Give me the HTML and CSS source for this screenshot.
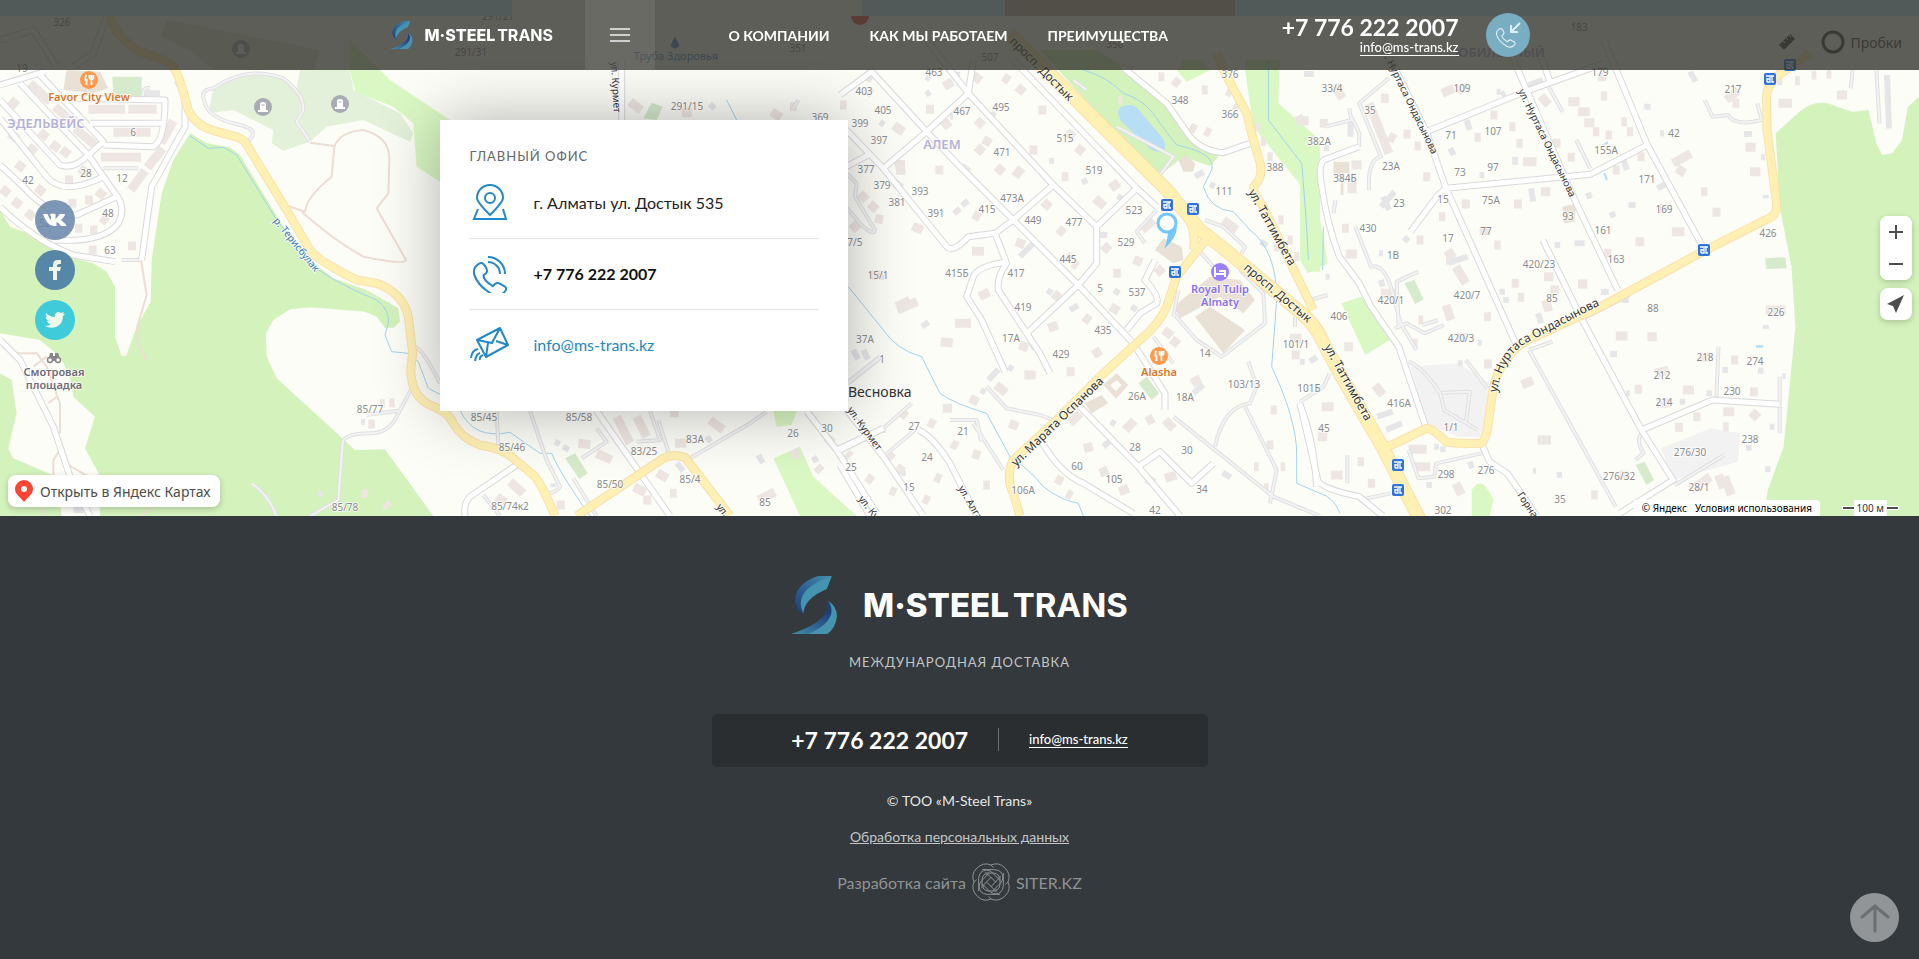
FILE: index.html
```html
<!DOCTYPE html>
<html lang="ru">
<head>
    <meta charset="UTF-8">
    <meta name="viewport" content="width=device-width, initial-scale=1.0">
    <title>M-Steel Trans</title>
    <link rel="stylesheet" href="styles.css">
</head>
<body>
    <!-- shared icons -->
    <svg class="sprite" aria-hidden="true">
        <defs>
            <linearGradient id="logo-top" x1="0" y1="1" x2="1" y2="0">
                <stop offset="0" stop-color="#1d3c78"/>
                <stop offset="1" stop-color="#428fae"/>
            </linearGradient>
            <linearGradient id="logo-bottom" x1="1" y1="0" x2="0" y2="1">
                <stop offset="0.2" stop-color="#1d3c78"/>
                <stop offset="1" stop-color="#428fae"/>
            </linearGradient>
            <symbol id="logo" viewBox="40 48 138 174">
                <path fill="url(#logo-top)" d="M122 48H162L147 87Q80 115 77 163Q50 145 52 116Q58 68 122 48Z"/>
                <path fill="#4593ae" d="M162 49L147 87Q80 115 77 160Q62 130 76 105Q94 72 162 49Z"/>
                <path fill="url(#logo-bottom)" d="M150 122Q166 132 164 156Q150 200 95 222H40Q120 195 143 162Q153 146 150 122Z"/>
                <path fill="#4593ae" d="M150 122Q178 138 178 168Q174 204 149 222H92Q152 196 161 160Q164 138 150 122Z"/>
            </symbol>
            <symbol id="handset" viewBox="0 0 100 100">
                <path fill="none" stroke="currentColor" stroke-width="5" stroke-linejoin="round" d="M5 26Q14 14 23 15Q34 24 35 34Q36 40 26 46Q27 60 50 73Q57 62 66 66L80 74Q86 79 80 86Q66 103 46 92Q12 72 3 44Q1 34 5 26Z"/>
            </symbol>
            <symbol id="stop" viewBox="0 0 12 12">
                <rect width="12" height="12" rx="2" fill="#2f73e0"/>
                <path fill="none" stroke="#fff" stroke-width="1.3" d="M2 3H10M8 3V9H10M3 5V9M6 4V7M3 9H6V6H3"/>
            </symbol>
            <symbol id="food" viewBox="0 0 18 18">
                <circle cx="9" cy="9" r="9" fill="#ff9a4d"/>
                <path fill="none" stroke="#fff" stroke-width="1.8" d="M6.500 4Q5 5 5.500 9H6.500V14M11.500 4V14M9.500 4V7Q11.500 10 13.500 7V4"/>
            </symbol>
            <symbol id="grave" viewBox="0 0 18 18">
                <circle cx="9" cy="9" r="9" fill="#a9abb5"/>
                <path fill="#fff" d="M6 12V6Q6 4 9 4Q12 4 12 6V12H14V14H4V12Z"/>
                <path stroke="#a9abb5" d="M7.500 7H10.500"/>
            </symbol>
        </defs>
    </svg>

    <header class="header">
        <div class="header-inner">
            <a class="brand brand-small" href="#">
                <svg class="brand-mark"><use href="#logo"/></svg>
                <span class="brand-name"><b>M·STEEL</b><span>TRANS</span></span>
            </a>
            <button class="burger" type="button" aria-label="Меню"><span></span><span></span><span></span></button>
            <nav class="nav">
                <a href="#">О КОМПАНИИ</a>
                <a href="#">КАК МЫ РАБОТАЕМ</a>
                <a href="#">ПРЕИМУЩЕСТВА</a>
            </nav>
            <div class="header-contacts">
                <a class="phone" href="tel:+77762222007">+7 776 222 2007</a>
                <a class="mail" href="mailto:info@ms-trans.kz">info@ms-trans.kz</a>
            </div>
            <button class="callback" type="button" aria-label="Обратный звонок">
                <svg viewBox="0 0 44 44" fill="none" stroke="#dfeef4">
                    <svg x="10" y="12" width="23" height="23" color="#dfeef4"><use href="#handset"/></svg>
                    <path stroke-width="2" d="M34 10L25 19M25 12V19H32"/>
                </svg>
            </button>
        </div>
    </header>

    <section class="gallery"><div class="slide slide-light"></div><div class="slide slide-brown"></div></section>

    <section class="map">
        <svg class="map-canvas" viewBox="0 16 1919 500" preserveAspectRatio="xMidYMin slice">
            <defs>
                <g id="streets">
                    <svg y="60" width="480" height="460" viewBox="0 0 1440 1380" overflow="visible">
                        <path d="M0 75L135 35M60 70L265 285L345 400Q380 440 355 490Q310 550 160 540M120 45L310 245L265 285Q220 330 180 315L0 120M0 175L140 350Q190 410 310 350M0 315L70 380Q150 470 230 465L350 410M0 440Q100 540 220 585L345 605M310 255L460 260Q495 240 495 120L230 115M270 190H485M530 60L555 100V200L455 380L425 600M0 840L60 900L160 1100L210 1250L270 1368M0 -60L100 -90L170 20M320 -130L280 -20L220 20"/>
                    </svg>
                    <svg x="430" y="100" width="480" height="420" viewBox="0 0 1440 1260" overflow="visible">
                        <path d="M500 933L720 1248M1130 933L1220 1050L1340 1240M1220 1050L1360 985M260 1095L120 1190Q100 1210 105 1248M575 -120V60"/>
                    </svg>
                    <svg x="840" y="60" width="480" height="460" viewBox="0 0 1440 1380" overflow="visible">
                        <path d="M0 105L95 35L260 215L350 310L520 480L715 675L880 850L975 1000V1050M260 -60L385 100L640 375L770 500V610L715 675L560 820M400 0L385 100L260 215L130 325M0 190L130 325L320 560Q340 580 385 530L465 520L520 480L640 375M890 385L770 500M520 0L890 385L950 440M465 520L500 610Q470 650 475 690L560 820L600 880L630 940M500 605Q410 620 400 650L380 710L425 780L495 935M860 810L900 760L950 730Q960 710 915 660L945 600M715 1035L895 1220L1020 1368M895 1220L960 1175L1055 1270L1120 1210M605 1145Q660 1240 730 1270L880 1360M235 1110Q280 1130 330 1210L410 1368M20 1050L130 1190L250 1368M0 1170L130 1105M0 1215L90 1368M840 15L980 130L1050 230Q1090 275 1150 278L1230 250M1380 1035Q1420 1130 1430 1280M0 330L85 285"/>
                    </svg>
                    <svg x="1300" y="60" width="619" height="460" viewBox="0 0 1568 1380" preserveAspectRatio="none" overflow="visible">
                        <path d="M205 -60L320 215L370 385L550 860M320 215L570 95L770 10M530 -30L600 160L700 430L805 690M605 -30L635 70M370 385L735 343L880 255M770 -60L880 255L1020 560M370 385L350 405L280 515M615 540L715 780L865 1110L945 1260L810 1360M865 1110L1045 1020L1215 1033M150 260L60 300Q45 320 55 380Q70 500 100 590L150 670L180 740L250 860L320 1105M460 1150L480 1205L525 1240L600 1368M0 1030L45 1260Q50 1285 150 1310L210 1368"/>
                    </svg>
                </g>
                <g id="lanes">
                    <svg y="60" width="480" height="460" viewBox="0 0 1440 1380" overflow="visible">
                        <path d="M740 245Q760 235 758 215Q750 200 700 190Q620 170 612 120Q600 90 640 85Q740 15 850 55Q920 110 908 155L890 185L930 245M1100 1065L1195 1052M1235 985L1195 1060Q1170 1120 1110 1120Q1030 1120 1028 1150L1015 1320L930 1368M755 1270Q810 1310 828 1368M1245 860Q1270 870 1320 970M1440 1290Q1370 1330 1400 1368M430 110Q425 80 450 85M310 325H415M365 600H420"/>
                    </svg>
                    <svg x="430" y="100" width="480" height="420" viewBox="0 0 1440 1260" overflow="visible">
                        <path d="M300 933L350 1080L390 1160Q380 1180 345 1180M205 1040L200 933M500 985L530 1025L455 1075M620 1025L690 1020L660 933M715 1055L685 960M780 1075L960 970L1010 935M430 1135L500 1248M1090 25L1105 0M160 1185L210 1248M1254 850L1350 775"/>
                    </svg>
                    <svg x="840" y="60" width="480" height="460" viewBox="0 0 1440 1380" overflow="visible">
                        <path d="M10 330L50 370L45 410L105 510Q100 530 60 490L0 420M25 965L120 890M130 1105L215 1030M130 1190L225 1110M440 980L500 1045L600 1065L640 1080M330 1080H410L425 1145M400 1090L490 1230M915 550L890 515L950 450M1000 770L1015 690M1000 760L1070 840L1145 890L1275 790L1270 700L1200 630M1095 480L1150 500L1215 560L1205 580M940 830L1000 910M1125 1160Q1150 1040 1230 1030L1250 980L1225 905M1000 1070L1300 1310L1440 1368M1215 1040L1310 1230L1290 1330M1075 570L1120 620M830 200L1000 290L960 345M700 60L740 90M1365 770V800"/>
                    </svg>
                    <svg x="1300" y="60" width="619" height="460" viewBox="0 0 1568 1380" preserveAspectRatio="none" overflow="visible">
                        <path d="M580 870L800 1340M580 870L640 845M720 775L835 705M225 55L150 130L205 290Q170 300 175 390M65 200L130 180L125 145M150 260L150 220L130 170M140 500L180 620Q210 610 230 680L255 790L295 870M300 635L245 665L250 800M240 805L270 790L315 820L365 795M310 795L350 780M275 905Q310 920 355 1000L365 1050L450 1110M360 998L430 995L420 1090M420 900L475 985M75 940L60 980L0 1025M1025 120L1045 170L1085 165Q1100 200 1170 180L1158 130M1060 860L1055 1010M1215 950V1120M865 1120Q850 1140 870 1180L850 1200M950 1275L1075 1185M275 1170L300 1255L340 1250L345 1210L460 1180M120 1185V1270M150 1320L230 1300M630 80L665 155M735 325L700 240M1395 85L1400 30M1468 190L1460 30M25 720L70 705M85 460L90 420"/>
                    </svg>
                </g>
                <g id="highways">
                    <svg y="60" width="480" height="460" viewBox="0 0 1440 1380" overflow="visible">
                        <path d="M330 -132Q340 -80 410 -30L500 5Q530 20 545 80L565 150Q585 195 640 212L715 232Q735 240 750 270L860 450L930 570Q950 600 1070 660L1130 670Q1210 700 1225 770L1238 880L1232 930Q1235 1010 1290 1035Q1345 1055 1360 1090Q1385 1135 1440 1155Q1510 1165 1540 1195L1600 1245Q1625 1270 1665 1368"/>
                    </svg>
                    <svg x="430" y="100" width="480" height="420" viewBox="0 0 1440 1260" overflow="visible">
                        <path d="M440 1248L700 1075Q725 1060 765 1072L900 1248"/>
                    </svg>
                    <svg x="840" y="60" width="480" height="460" viewBox="0 0 1440 1380" overflow="visible">
                        <path d="M1130 -20L1150 30L1220 160L1240 240L1255 290Q1275 345 1245 375Q1230 390 1270 440L1420 750M1105 530L1010 650L980 740Q960 790 900 840L780 950L650 1080L520 1200Q495 1250 520 1300L540 1368M1040 470Q1070 510 1060 570"/>
                    </svg>
                    <svg x="1300" y="60" width="619" height="460" viewBox="0 0 1568 1380" preserveAspectRatio="none" overflow="visible">
                        <path d="M215 1165L320 1105Q335 1105 370 1145Q390 1152 460 1150Q475 1130 478 1080L490 980Q510 890 570 845L770 735L1020 575L1195 470Q1212 455 1206 420L1183 210L1182 110Q1185 60 1225 35L1290 -20"/>
                    </svg>
                </g>
                <path id="avenue" d="M1010 34L1093 117L1167 190L1200 230L1223 248L1270 287L1300 312Q1315 324 1322 340L1340 374L1383 448L1420 520"/>
                <path id="ondasynova" d="M1497 393Q1503 354 1530 341L1606 302"/>
            </defs>

            <!-- parks, water, blocks -->
            <svg y="60" width="480" height="460" viewBox="0 0 1440 1380" overflow="visible">
                <path class="park" d="M0 450L30 500L160 550L200 590L280 610L320 635L345 680V830L365 888H378L410 800L452 725L455 600L485 400L520 300L570 220L620 250L690 262L720 285L850 500L930 600L1000 655L1100 690L1195 745L1200 785L1180 803H1155L1130 770L1095 755L930 742L870 748L820 780L798 820L800 890L830 955L1000 1110L1065 1170L1155 1168L1300 1368H300L296 1240L255 1165L285 1070L220 1010L210 950L180 890L120 840L0 820ZM0 940L35 960L50 1060L25 1165L40 1195L170 1250L185 1368H0Z"/>
                <path class="park-dull" d="M640 85Q740 20 850 55L890 85L900 30H1050L1060 90L1200 160L1240 220L1230 245L1090 180L980 200L930 245L850 272L815 250L820 210L700 150L625 160ZM485 -70L500 -120L960 -30L940 30H640L580 -20Z"/>
                <path class="park-light" d="M1050 30L1048 -60L1170 60L1350 180L1320 365L1250 320L1240 190L1180 140L1065 95Z"/>
                <path class="court" d="M337 50H425V108H340Z"/>
                <path class="mall" d="M190 90L200 30L300 35L325 85L280 100Z"/>
            </svg>
            <svg x="430" y="100" width="480" height="420" viewBox="0 0 1440 1260" overflow="visible">
                <path class="park-light" d="M1030 1075L1110 1040L1150 1130L1280 1248H1110ZM1030 933H1100L1085 975L1040 980Z"/>
                <path class="court" d="M405 1075L435 1060L473 1120L448 1137ZM640 55L665 8L698 20L680 60Z"/>
            </svg>
            <svg x="840" y="60" width="480" height="460" viewBox="0 0 1440 1380" overflow="visible">
                <path class="park" d="M600 -30H770L870 30Q960 90 1000 160L1060 240L1135 290L1110 318L1030 290L960 345L800 190Z"/>
                <path class="park-light" d="M1010 30L1030 0H1080L1110 30L1040 65ZM1215 30V0H1320L1315 130L1440 240V635H1410L1380 580L1385 380L1240 200Z"/>
                <path class="pond" d="M834 160Q836 138 858 136Q882 132 895 148L968 235Q980 255 972 272Q950 280 932 268L842 182Z"/>
                <path class="court" d="M895 970L920 950L958 1000L935 1020Z"/>
                <path class="mall" d="M1000 740L1110 650L1200 660L1245 720L1210 760L1140 710L1020 775ZM1065 770L1110 740L1215 810L1150 880ZM945 570L970 535L1025 560L1030 600L1000 610ZM735 1030L785 1005L805 1030L755 1060ZM1015 300L1040 285L1065 310L1060 335L1030 335Z"/>
                <path class="mall-ring" d="M800 975L830 950L855 975L828 1005Z"/>
            </svg>
            <svg x="1300" y="60" width="619" height="460" viewBox="0 0 1568 1380" preserveAspectRatio="none" overflow="visible">
                <path class="park" d="M1205 220L1265 155Q1310 110 1360 140L1400 155L1440 150L1460 250L1475 285L1500 280L1525 240L1540 140L1568 110V1368H1175L1185 1290L1225 1160L1255 800L1245 620L1215 440Z"/>
                <path class="park-light" d="M0 230L40 400L70 610L20 640L0 600ZM105 730L155 710L175 735L235 835L165 885ZM435 1368L435 1290Q460 1240 490 1320L480 1368Z"/>
                <path class="yard" d="M915 1165L1040 1105L1115 1120L1110 1205L945 1260ZM280 920L400 910L480 970L465 1130L400 1130L320 1090Z"/>
                <path class="court" d="M1178 595L1230 592L1233 625L1182 627ZM265 670L290 660L313 718L292 732ZM850 1215L873 1205L897 1260L878 1275Z"/>
                <path class="mall" d="M85 305H125V340H110V405H103V350H85ZM665 440L700 430L695 485L668 490Z"/>
                <path class="pond" d="M765 255L780 243V253ZM768 340L773 338L780 358L775 362ZM1155 855H1173V863H1155Z"/>
            </svg>

            <!-- houses: short thick strokes -->
            <svg y="60" width="480" height="460" viewBox="0 0 1440 1380" overflow="visible">
                <path class="house" d="M30 220l22 18M50 310l22 18M85 260l22 18M120 215l22 18M155 250l22 18M185 268l22 18M30 120l22 18M195 360h24M240 325l22 18M5 385l22 18M40 420l22 18M80 455l22 18M110 382l22 18M205 430h24M255 420h24M292 392l22 18M225 505h22M270 510h22M304 472l18 14M266 570h24M384 558h24M265 148H375M385 148H470M340 217H452M303 292H423M483 248L520 183M442 323L488 265M392 390L435 332M90 70L150 125M165 140L220 190M225 205L285 255M1105 1092h20M1168 1028h16M1140 1030h14M1085 1300h18M1155 1330l12 12"/>
                <path class="shed" d="M435 100H480M955 1303h14M1083 1086h12M220 1350h30"/>
            </svg>
            <svg x="430" y="100" width="480" height="420" viewBox="0 0 1440 1260" overflow="visible">
                <path class="house" d="M600 5l34 26M1025 35l28 18M755 38h30M720 938h26M840 960l40 30M735 1030h34M500 1060l45 20M445 1030l36 4M682 1118l30 18M612 1160l34 18M200 1190l26 18M240 1145l40 36M380 1215h24M985 1200l50 -24M1088 1068l20 -14M1190 1030l18 -20M640 1200h24M1160 1100l14 14M1395 80l26 16M1405 185l10 36M1390 245l24 20M1400 620l40 -20M1265 370l20 20M1290 280l20 20M1320 310l20 20M1335 355l24 4M1320 525l50 0M560 950l40 80M620 950l30 60M1370 1060l20 16M1400 1100l20 16M1310 1130l18 14M1250 1060l12 10M1080 20h20M1230 15h20M720 1180h20"/>
                <path class="shed" d="M840 12l14 14M985 1065l14 24M740 1090l20 22M375 1025l14 8M1150 1070l10 16M1300 750l14 28M1270 750l14 28M1350 65l12 10M400 1040l16 10M370 1150v12M830 1010l12 16"/>
            </svg>
            <svg x="840" y="60" width="480" height="460" viewBox="0 0 1440 1380" overflow="visible">
                <path class="house" d="M312 80l26 -16M400 45l22 18M490 50l18 12M532 80l20 18M595 150h24M258 148h24M75 45l22 12M162 195l24 20M308 200l22 -16M410 180l20 18M430 238l22 12M568 270h24M680 215l20 18M710 262l20 16M182 300v44M286 330h24M365 320l20 18M410 260l20 18M470 320l20 18M525 350l20 -26M665 350h20M812 385l24 -18M765 415l28 24M218 498l30 14M400 462l20 12M396 574h36M528 545l26 10M610 425l20 18M655 505l18 16M680 585l18 16M790 555l18 18M820 640h22M882 598l24 10M950 622l18 20M418 710l30 -14M172 750l60 -26M302 845l36 4M345 790h48M640 700l18 14M732 770l18 14M812 740l24 14M625 805l28 -10M538 855l26 8M680 935h24M760 885l22 -14M553 945h34M468 975l30 24M972 810l24 18M995 838l20 16M95 645h40M308 1045h28M390 1015l24 12M265 1085l20 10M180 1055l20 14M335 1150l18 10M398 1180l22 8M430 1275h20M285 1250l18 8M250 1315l18 8M150 1290l18 8M508 1090l26 10M690 1090l30 -30M732 1165l26 -6M780 1240l24 -10M648 1255l20 10M680 1300l16 8M838 1295l28 -10M920 1255l22 14M975 1255l34 -10M855 1110l28 -28M920 1085l20 -12M975 1080l26 26M1055 970l26 -14M1350 835h34M1355 885h24M1292 1050h18M1280 1155h20M1242 1220h14M1322 1220h14M1272 1283h14M955 50h18M1000 60l18 14M1085 90h18M1050 200l18 10M1095 212l16 8M1160 92l16 8M1182 135l14 8M1245 200h16M1262 245h16M1282 290h16M1368 185l24 -12M1408 245l18 -8M1315 480h16M1342 540h16M1362 590h16M1302 560h16M905 510l36 -30M1150 480l40 30M80 90l16 10M700 610l12 10M835 120l12 0"/>
                <path class="shed" d="M258 50l12 8M258 104l12 -8M348 44h12M452 160l14 8M366 436l18 -14M342 460l18 -14M628 302h14M726 368l16 -8M832 408l14 8M540 590L580 550M780 525h22M822 690l16 10M874 740l16 10M622 690l14 10M690 750l24 -14M246 800l20 -14M575 850l10 18M445 960l30 -32M422 990l14 8M812 1085l14 8M125 1110h12M1065 350l26 -14M1110 372l14 8M1262 545l20 12M1392 42h28M1148 1238l24 14M790 1160l22 -18M1380 905l14 0M1410 905l20 -14M1060 1000l30 -26M505 920l14 8M330 170h10M185 1240h12"/>
            </svg>
            <svg x="1300" y="60" width="619" height="460" viewBox="0 0 1568 1380" preserveAspectRatio="none" overflow="visible">
                <path class="house" d="M88 75l20 40M2 182h20M50 190h20M175 130L225 280M225 228l16 10M262 222h18M290 258h16M360 100l30 -16M400 92l26 -12M482 165h18M442 232h16M530 200h16M548 250h16M565 305h34M610 108l20 26M680 125h28M704 155h30M720 188h26M762 108h16M755 50h20M640 250h20M678 292h18M742 215h16M774 225h16M792 330h18M814 185h14M828 215h16M855 290h18M945 310L990 280M955 325l20 15M1080 120L1110 90M1128 262h26M1140 335h26M1212 130h34M1360 105h26M1208 62h14M1254 62h12M1296 46h12M1334 42h12M1016 395h16M1045 457h20M910 445h28M942 515h32M850 545h22M770 580h18M704 672h24M618 650h24M536 670h18M552 712h16M634 690h22M622 720l8 34M466 770h18M395 620l25 50M370 600h24M352 470h16M410 432h20M312 350h18M106 505h18M116 582h28M295 540h18M205 700h36M370 735l12 45M398 832h24M466 912h20M284 850h14M112 860h22M55 1040h30M45 1130h24M78 1245h30M146 1205h16M172 1270h18M190 975l20 30M275 1168h46M290 1220h40M395 1270l14 34M562 975l28 -14M602 1140h34M800 828h30M880 830h24M900 940l34 -10M1012 892h30M970 990h28M904 1030h32M848 988h18M950 1102h20M996 1070h18M1072 1055h28M1144 1075l16 -20M1140 995h20M1092 900h18M1072 1100h14M1180 750h50M738 1305h16M808 1245h24M990 1290L1040 1250M1060 1245l12 40M1075 1250l18 55M610 395h24M542 432h20M492 555h16M455 512h28M370 590l20 -16M130 315h26M132 340v60M1095 130h18M300 780h12M205 115h20"/>
                <path class="shed" d="M60 265h14M128 180v50M380 265l10 20M455 345h12M498 95h10M422 180l8 30M545 290v24M610 195h10M510 105l10 -6M905 385l24 -14M872 140h16M988 35l14 30M1125 222h20M1168 292h10M1180 405v10M785 468l14 -8M725 410l14 -6M832 435h18M695 550h26M645 555h14M585 385l6 40M580 75L615 60M205 440L240 395M210 410l16 40M264 545l10 -14M205 660l4 20M200 580h10M375 608L425 590M505 695h14M515 720h14M603 760l8 30M762 695h20M815 720h18M785 882h18M1030 1000h14M826 1000h10M962 1025h14M1070 930h14M1160 932h14M1222 948h8M1130 1163h14M1178 1228h14M1487 45L1492 205M218 1110L258 1090M195 1070L235 1055M320 1275h14M340 1160h12M355 1168h14M430 1205l6 20M1190 1100h12M1180 795v12M912 220h10M65 650h10M820 300l8 30M10 42h24M650 1245h14M590 1232h8M400 910h12M450 848h10"/>
            </svg>

            <!-- footpaths and rivers -->
            <svg y="60" width="480" height="460" viewBox="0 0 1440 1380" overflow="visible">
                <path class="foot" d="M865 438L915 455Q920 410 995 350L1003 260Q1020 215 1090 210Q1170 230 1168 300L1165 400L1130 445L1218 600Q1215 615 1090 590Q1000 540 905 455M930 248L1003 258M423 600L440 705L412 800L415 850L440 900M50 880L110 880L140 920L180 1030V1120M100 920L140 890M145 1030L170 1010M180 1170L160 1200V1245M205 1215L265 1250M130 1368V1340M425 1368L460 1340"/>
                <path class="river" d="M570 228L625 265L670 262L710 285L830 480L950 625Q1010 670 1130 720Q1170 750 1165 790L1155 825L1175 875L1225 880L1255 905L1285 985L1320 1003L1380 1050Q1420 1140 1530 1117L1620 1180H1655Q1680 1240 1770 1368"/>
            </svg>
            <svg x="840" y="60" width="480" height="460" viewBox="0 0 1440 1380" overflow="visible">
                <path class="river" d="M-340 120Q-320 160 -300 200M25 680L130 810Q170 870 245 890L300 1000Q340 1030 440 1060L510 1190Q560 1220 610 1280Q660 1320 715 1330L730 1368M730 30Q800 50 850 100Q920 120 960 190L1010 255Q1130 280 1115 330L1090 380Q1110 450 1180 455L1230 510Q1310 570 1310 720L1295 920Q1370 1080 1370 1180V1270L1440 1300Q1480 1310 1500 1360M1285 0V180L1385 310Q1400 480 1405 600M1450 500L1448 630"/>
            </svg>

            <!-- roads -->
            <use class="lane-case" href="#lanes"/>
            <use class="lane-fill" href="#lanes"/>
            <use class="street-case" href="#streets"/>
            <use class="street-fill" href="#streets"/>
            <use class="highway-case" href="#highways"/>
            <use class="avenue-case" href="#avenue"/>
            <use class="highway-fill" href="#highways"/>
            <use class="avenue-fill" href="#avenue"/>

            <!-- house numbers -->
            <g class="num">
                <text x="62" y="26">326</text><text x="22" y="72">19</text><text x="498" y="20">291/27</text><text x="471" y="56">291/31</text><text x="798" y="52">351</text><text x="990" y="61">507</text><text x="1115" y="48">350</text><text x="1579" y="31">183</text>
                <text x="133" y="136">6</text><text x="86" y="177">28</text><text x="28" y="184">42</text><text x="122" y="182">12</text><text x="108" y="217">48</text><text x="45" y="227">52</text><text x="110" y="254">63</text><text x="370" y="413">85/77</text><text x="345" y="511">85/78</text>
                <text x="687" y="110">291/15</text><text x="820" y="121">369</text><text x="484" y="421">85/45</text><text x="579" y="421">85/58</text><text x="793" y="437">26</text><text x="827" y="432">30</text><text x="695" y="443">83А</text><text x="512" y="451">85/46</text><text x="644" y="455">83/25</text><text x="610" y="488">85/50</text><text x="690" y="483">85/4</text><text x="765" y="506">85</text><text x="510" y="510">85/74к2</text>
                <text x="934" y="76">463</text><text x="864" y="95">403</text><text x="883" y="114">405</text><text x="860" y="127">399</text><text x="962" y="115">467</text><text x="1001" y="111">495</text><text x="879" y="144">397</text><text x="1002" y="156">471</text><text x="1065" y="142">515</text><text x="1094" y="174">519</text><text x="866" y="173">377</text><text x="882" y="189">379</text><text x="920" y="195">393</text><text x="897" y="206">381</text><text x="936" y="217">391</text><text x="1012" y="202">473А</text><text x="987" y="213">415</text><text x="1033" y="224">449</text><text x="1074" y="226">477</text><text x="1134" y="214">523</text><text x="1126" y="246">529</text><text x="1068" y="263">445</text><text x="957" y="277">415Б</text><text x="1016" y="277">417</text><text x="1100" y="292">5</text><text x="1137" y="296">537</text><text x="1023" y="311">419</text><text x="878" y="279">15/1</text><text x="852" y="246">77/5</text><text x="1103" y="334">435</text><text x="1011" y="342">17А</text><text x="865" y="343">37А</text><text x="882" y="363">1</text><text x="1061" y="358">429</text><text x="1205" y="357">14</text><text x="1244" y="388">103/13</text><text x="1296" y="348">101/1</text><text x="1137" y="400">26А</text><text x="1185" y="401">18А</text><text x="914" y="430">27</text><text x="963" y="435">21</text><text x="927" y="461">24</text><text x="1135" y="451">28</text><text x="1187" y="454">30</text><text x="1077" y="470">60</text><text x="1114" y="483">105</text><text x="1202" y="493">34</text><text x="1155" y="514">42</text><text x="909" y="491">15</text><text x="851" y="471">25</text><text x="1023" y="494">106А</text><text x="1180" y="104">348</text><text x="1230" y="78">376</text><text x="1230" y="118">366</text><text x="1275" y="171">388</text><text x="1224" y="195">111</text><text x="1309" y="392">101Б</text>
                <text x="1332" y="92">33/4</text><text x="1370" y="114">35</text><text x="1462" y="92">109</text><text x="1600" y="76">179</text><text x="1733" y="93">217</text><text x="1319" y="145">382А</text><text x="1451" y="139">71</text><text x="1493" y="135">107</text><text x="1674" y="137">42</text><text x="1606" y="154">155А</text><text x="1391" y="170">23А</text><text x="1345" y="182">384Б</text><text x="1460" y="176">73</text><text x="1493" y="171">97</text><text x="1647" y="183">171</text><text x="1443" y="203">15</text><text x="1491" y="204">75А</text><text x="1399" y="207">23</text><text x="1664" y="213">169</text><text x="1568" y="220">93</text><text x="1368" y="232">430</text><text x="1448" y="242">17</text><text x="1486" y="235">77</text><text x="1603" y="234">161</text><text x="1768" y="237">426</text><text x="1393" y="259">1В</text><text x="1539" y="268">420/23</text><text x="1616" y="263">163</text><text x="1391" y="304">420/1</text><text x="1467" y="299">420/7</text><text x="1552" y="302">85</text><text x="1653" y="312">88</text><text x="1339" y="320">406</text><text x="1776" y="316">226</text><text x="1461" y="342">420/3</text><text x="1705" y="361">218</text><text x="1755" y="365">274</text><text x="1662" y="379">212</text><text x="1732" y="395">230</text><text x="1399" y="407">416А</text><text x="1664" y="406">214</text><text x="1451" y="431">1/1</text><text x="1324" y="432">45</text><text x="1750" y="443">238</text><text x="1690" y="456">276/30</text><text x="1446" y="478">298</text><text x="1486" y="474">276</text><text x="1619" y="480">276/32</text><text x="1699" y="491">28/1</text><text x="1560" y="503">35</text><text x="1443" y="514">302</text>
            </g>

            <!-- street names -->
            <g class="street-name">
                <text transform="translate(1009 42) rotate(45)">просп. Достык</text>
                <text transform="translate(1243 269) rotate(40)">просп. Достык</text>
                <text transform="translate(1248 192) rotate(61)">ул. Таттимбета</text>
                <text transform="translate(1324 347) rotate(61)">ул. Таттимбета</text>
                <text transform="translate(1016 467) rotate(-44)">ул. Марата Оспанова</text>
                <text><textPath href="#ondasynova">ул. Нуртаса Ондасынова</textPath></text>
            </g>
            <g class="street-name street-small">
                <text transform="translate(1380 48) rotate(64)">ул. Нуртаса Ондасынова</text>
                <text transform="translate(1518 91) rotate(64)">ул. Нуртаса Ондасынова</text>
                <text transform="translate(847 410) rotate(54)">ул. Курмет</text>
                <text transform="translate(611 62) rotate(87)">ул. Курмет</text>
                <text transform="translate(858 499) rotate(52)">ул. Курмет</text>
                <text transform="translate(958 488) rotate(60)">ул. Алгабас</text>
                <text transform="translate(716 507) rotate(52)">ул. Горная</text>
                <text transform="translate(1517 495) rotate(56)">Горная</text>
                <text class="river-name" transform="translate(273 221) rotate(51)">р. Терисбулак</text>
            </g>

            <!-- places -->
            <g class="place">
                <use href="#food" x="80" y="71" width="18" height="18"/>
                <text class="food" x="89" y="101">Favor City View</text>
                <use href="#food" x="1150" y="347" width="18" height="18"/>
                <text class="food" x="1159" y="376">Alasha</text>
                <use href="#grave" x="254" y="98" width="18" height="18"/>
                <use href="#grave" x="331" y="95" width="18" height="18"/>
                <use href="#grave" x="232" y="40" width="18" height="18"/>
                <circle cx="1220" cy="272" r="9" fill="#9a80ff"/>
                <path fill="none" stroke="#fff" stroke-width="2" d="M1215 267V277M1215 274H1225V277M1219 271H1225V274"/>
                <text class="hotel" x="1220" y="293">Royal Tulip</text>
                <text class="hotel" x="1220" y="306">Almaty</text>
                <path fill="#8a8588" d="M48 361L50 353H53V356H55V353H58L61 361Z"/>
                <g fill="#fff" stroke="#8a8588" stroke-width="1.500"><circle cx="50" cy="360" r="2.500"/><circle cx="58" cy="360" r="2.500"/></g>
                <text class="view" x="54" y="376">Смотровая</text>
                <text class="view" x="54" y="389">площадка</text>
                <text class="district" x="46" y="128">ЭДЕЛЬВЕЙС</text>
                <text class="district" x="942" y="149">АЛЕМ</text>
                <text class="district" x="1500" y="57">ЮБИЛЕЙНЫЙ</text>
                <text class="town" x="848" y="397">Весновка</text>
                <circle cx="860" cy="16" r="9" fill="#e8554e"/>
                <path fill="#4a97cf" d="M675 37Q680 45 679 46Q675 51 671 46Q671 43 675 37Z"/>
                <text class="spring" x="676" y="60">Труба Здоровья</text>
            </g>
            <use href="#stop" x="1161" y="199" width="12" height="12"/>
            <use href="#stop" x="1187" y="203" width="12" height="12"/>
            <use href="#stop" x="1169" y="266" width="12" height="12"/>
            <use href="#stop" x="1392" y="459" width="12" height="12"/>
            <use href="#stop" x="1392" y="484" width="12" height="12"/>
            <use href="#stop" x="1698" y="244" width="12" height="12"/>
            <use href="#stop" x="1764" y="73" width="12" height="12"/>
            <use href="#stop" x="1784" y="59" width="12" height="12"/>

            <!-- office pin -->
            <path fill="#74c7fa" d="M1177 226Q1177 238 1164 249Q1168 240 1168 230Z"/>
            <circle cx="1167" cy="223" r="9" fill="#fff" stroke="#74c7fa" stroke-width="3"/>
        </svg>

        <div class="map-top">
            <button type="button" class="map-btn" aria-label="Линейка">
                <svg width="20" height="20" viewBox="0 0 20 20"><path fill="#4d4d4d" d="M2 13L13 2L18 7L7 18Z"/><path stroke="#fff" d="M6 9L8 11M9 6L11 8M12 3L14 5"/></svg>
            </button>
            <button type="button" class="map-btn map-traffic">
                <svg width="24" height="24" viewBox="0 0 24 24"><circle cx="12" cy="12" r="10" fill="none" stroke="#4d4d4d" stroke-width="3"/></svg>
                Пробки
            </button>
        </div>

        <div class="map-zoom">
            <div class="map-zoom-group">
                <button type="button" class="map-btn" aria-label="Приблизить"><svg width="14" height="14"><path stroke="#4d4d4d" stroke-width="2" d="M7 0V14M0 7H14"/></svg></button>
                <button type="button" class="map-btn" aria-label="Отдалить"><svg width="14" height="14"><path stroke="#4d4d4d" stroke-width="2" d="M0 7H14"/></svg></button>
            </div>
            <button type="button" class="map-btn" aria-label="Моё местоположение"><svg width="18" height="18"><path fill="#4d4d4d" d="M17 0L9 18L6 11L0 9Z"/></svg></button>
        </div>

        <a class="map-open" href="#">
            <svg width="18" height="22" viewBox="0 0 18 22"><path fill="#ff4433" d="M9 0A9 9 0 0 1 18 9C18 14 13 17 9 22C5 17 0 14 0 9A9 9 0 0 1 9 0Z"/><circle cx="9" cy="9" r="3" fill="#fff"/></svg>
            Открыть в Яндекс Картах
        </a>

        <div class="map-legal">
            <a href="#">© Яндекс</a>
            <a href="#">Условия использования</a>
        </div>
        <div class="map-scale"><span>100 м</span></div>

        <div class="container">
            <div class="office">
                <h2>ГЛАВНЫЙ ОФИС</h2>
                <ul>
                    <li>
                        <svg viewBox="0 0 40 40" fill="none" stroke="#2387c8" stroke-width="2">
                            <path d="M20 33Q7 20 7 16A13 13 0 0 1 33 16Q33 20 20 33Z"/>
                            <circle cx="20" cy="16" r="5"/>
                            <path d="M8 27L4 37H36L33 27"/>
                        </svg>
                        <span>г. Алматы ул. Достык 535</span>
                    </li>
                    <li>
                        <svg viewBox="0 0 40 40" fill="none" stroke="#2387c8" stroke-width="2">
                            <svg x="3" y="4" width="33" height="33" color="#2387c8"><use href="#handset"/></svg>
                            <path d="M18 4A17 17 0 0 1 35 21M18 9A12 12 0 0 1 30 21"/>
                        </svg>
                        <a class="office-phone" href="tel:+77762222007">+7 776 222 2007</a>
                    </li>
                    <li>
                        <svg viewBox="0 0 40 40" fill="none" stroke="#2387c8" stroke-width="2" stroke-linejoin="round">
                            <path d="M7 15L30 3L38 20L16 32ZM7 15L22 18L30 3M16 32L18 18M38 20L26 16M1 33Q2 25 8 24M5 36Q6 29 10 28M10 35Q9 32 13 30"/>
                        </svg>
                        <a class="office-mail" href="mailto:info@ms-trans.kz">info@ms-trans.kz</a>
                    </li>
                </ul>
            </div>
        </div>
    </section>

    <div class="social">
        <a class="vk" href="#" aria-label="ВКонтакте"><svg width="24" height="14" viewBox="0 0 24 14"><path fill="#fff" d="M0 1H4.500Q6 5 8 7V3L6.500 1.500Q9 0 12.500 1V6Q15 4 16.500 1H22Q22 3 18 7Q23 11 23.500 13H18Q15.500 9.500 13.500 9V13H11Q4 13 0 1Z"/></svg></a>
        <a class="fb" href="#" aria-label="Facebook"><svg width="12" height="20" viewBox="0 0 12 20"><path fill="#eef5ea" d="M4 20V11H0V7H4V5Q4 0 9 0H12V4H10Q8 4 8 6V7H12L11 11H8V20Z"/></svg></a>
        <a class="tw" href="#" aria-label="Twitter"><svg width="20" height="16" viewBox="0 0 20 16"><path fill="#eef9ea" d="M1 1Q5 5 10 5Q9 1 13 0Q15 0 16 1L19 0L18 2L20 2L18 4Q18 12 11 15Q5 17 0 14Q4 14 6 12Q3 12 2 9H4Q1 8 1 5L2 5Q0 3 1 1Z"/></svg></a>
    </div>

    <footer class="footer">
        <a class="brand" href="#">
            <svg class="brand-mark"><use href="#logo"/></svg>
            <span class="brand-name"><b>M·STEEL</b><span>TRANS</span></span>
        </a>
        <p class="slogan">МЕЖДУНАРОДНАЯ ДОСТАВКА</p>
        <div class="footer-contacts">
            <a class="phone" href="tel:+77762222007">+7 776 222 2007</a>
            <span class="divider"></span>
            <a class="mail" href="mailto:info@ms-trans.kz">info@ms-trans.kz</a>
        </div>
        <p class="copy">© ТОО «M-Steel Trans»</p>
        <a class="policy" href="#">Обработка персональных данных</a>
        <a class="dev" href="#">
            Разработка сайта
            <svg width="38" height="38" viewBox="0 0 114 114" fill="none" stroke="currentColor" stroke-width="3">
                <defs><path id="knot" d="M57 6Q80 -4 98 14Q118 34 108 57M20 84V46Q22 22 44 21Q54 22 62 30L84 52M30 76V50Q32 32 46 33L72 58M6 57L14 50"/></defs>
                <use href="#knot"/>
                <use href="#knot" transform="rotate(90 57 57)"/>
                <use href="#knot" transform="rotate(180 57 57)"/>
                <use href="#knot" transform="rotate(270 57 57)"/>
            </svg>
            SITER.KZ
        </a>
    </footer>

    <button class="to-top" type="button" aria-label="Наверх">
        <svg width="30" height="30" fill="none" stroke="#6b6f71" stroke-width="3" stroke-linecap="round"><path d="M15 28V3M2 14L15 3L28 14"/></svg>
    </button>
</body>
</html>
```

FILE: styles.css
```css
* {
    box-sizing: border-box;
}

body {
    margin: 0;
    font-family: Lato, "Open Sans", sans-serif;
    font-size: 14px;
    color: #fff;
    background: #33393c;
}

a {
    color: inherit;
    text-decoration: none;
}

button {
    display: flex;
    align-items: center;
    justify-content: center;
    padding: 0;
    border: none;
    font-family: inherit;
    cursor: pointer;
}

.sprite {
    position: absolute;
    width: 0;
    height: 0;
}

/* header */
.header {
    position: fixed;
    top: 0;
    left: 0;
    right: 0;
    z-index: 10;
    background: rgba(54, 54, 48, 0.8);
}

.header-inner,
.container {
    max-width: 1140px;
    margin: 0 auto;
}

.header-inner {
    display: flex;
    align-items: center;
    height: 70px;
}

.brand {
    display: flex;
    align-items: center;
    gap: 26px;
}

.brand-mark {
    width: 46px;
    height: 58px;
}

.brand-name {
    display: flex;
    gap: 4px;
    font-family: Inter, sans-serif;
    font-size: 33px;
    line-height: 40px;
    font-weight: 700;
}

.brand-name b {
    font-weight: 800;
}

.brand-small {
    gap: 12px;
    width: 165px;
    margin-right: 30px;
}

.brand-small .brand-mark {
    width: 23px;
    height: 28px;
}

.brand-small .brand-name {
    gap: 2px;
    font-size: 16px;
    line-height: 20px;
}

.burger {
    flex-direction: column;
    gap: 4px;
    width: 70px;
    height: 70px;
    background: rgba(255, 255, 255, 0.08);
}

.burger span {
    width: 20px;
    height: 2px;
    background: #cfcfcd;
}

.nav {
    display: flex;
    gap: 40px;
    margin-left: 74px;
    font-weight: 700;
}

.header-contacts {
    display: flex;
    flex-direction: column;
    align-items: flex-end;
    margin: 0 27px 0 auto;
}

.phone {
    font-size: 23px;
    line-height: 26px;
    font-weight: 700;
}

.mail {
    font-size: 13px;
    line-height: 15px;
    font-weight: 500;
    border-bottom: 1px solid #fff;
}

.callback {
    width: 44px;
    height: 44px;
    border-radius: 50%;
    background: #79adc2;
}

/* end of the previous block */
.gallery {
    display: flex;
    gap: 143px;
    height: 16px;
    padding-left: calc(50% - 448px);
    background: #bfeaff;
}

.slide-light {
    width: 350px;
    background: #fcfdf7;
}

.slide-brown {
    width: 230px;
    background: #c3b4b0;
}

/* map */
.map {
    position: relative;
    height: 500px;
    overflow: hidden;
    background: #fcfdf7;
    font-family: "Noto Sans", sans-serif;
}

.map-canvas {
    position: absolute;
    top: 0;
    left: 0;
    width: 100%;
    height: 100%;
}

.map-canvas path {
    vector-effect: non-scaling-stroke;
}

.park { fill: #d4f2bc; }
.park-light { fill: #daf8c4; }
.park-dull { fill: #e3f0da; }
.court { fill: #d5ebcc; }
.mall { fill: #eae1d6; }
.mall-ring { fill: none; stroke: #eae1d6; stroke-width: 5px; }
.yard { fill: #f2f2f2; }
.pond { fill: #b8def6; }

.house,
.shed,
.foot,
.river {
    fill: none;
    stroke-width: 9px;
    stroke: #eee6e2;
}

.shed {
    stroke: #e6e6e9;
    stroke-width: 6px;
}

.foot {
    stroke: #eeddd4;
    stroke-width: 2px;
}

.river {
    stroke: #a3d3ee;
    stroke-width: 1px;
}

.lane-case,
.lane-fill,
.street-case,
.street-fill,
.highway-case,
.highway-fill,
.avenue-case,
.avenue-fill {
    fill: none;
    stroke-linejoin: round;
}

.lane-case { stroke: #e0e0e3; stroke-width: 4px; }
.lane-fill { stroke: #f3f3f4; stroke-width: 2px; }
.street-case { stroke: #d9d9dc; stroke-width: 7px; }
.street-fill { stroke: #fff; stroke-width: 5px; }
.highway-case { stroke: #fbe0ab; stroke-width: 9px; }
.highway-fill { stroke: #fff1b4; stroke-width: 7px; }
.avenue-case { stroke: #fbe0ab; stroke-width: 14px; }
.avenue-fill { stroke: #fff1b4; stroke-width: 12px; }

.map-canvas text {
    paint-order: stroke;
    stroke: rgba(255, 255, 255, 0.7);
    stroke-width: 2px;
}

.num {
    font-size: 10px;
    text-anchor: middle;
    fill: #8b8b8b;
}

.street-name {
    font-size: 12px;
    fill: #333;
}

.street-small {
    font-size: 10px;
}

.river-name {
    fill: #3a78bd;
}

.place {
    font-size: 11px;
    font-weight: 600;
    text-anchor: middle;
}

.food { fill: #d97726; }
.hotel { fill: #8b6ff0; }
.view { fill: #6f6c78; }

.district {
    font-size: 13px;
    fill: #b6b1da;
}

.town {
    font-size: 14px;
    font-weight: 400;
    text-anchor: start;
    fill: #333;
}

.spring {
    font-weight: 400;
    fill: #4a97cf;
}

.map-btn {
    min-width: 32px;
    height: 32px;
    border-radius: 8px;
    background: #fff;
    color: #4d4d4d;
}

.map-top {
    position: absolute;
    top: 10px;
    right: 7px;
    display: flex;
    gap: 8px;
}

.map-traffic {
    gap: 5px;
    padding: 0 10px;
    font-size: 14px;
}

.map-zoom {
    position: absolute;
    top: 200px;
    right: 7px;
    display: flex;
    flex-direction: column;
    gap: 8px;
}

.map-zoom-group,
.map-zoom > .map-btn,
.map-open {
    border-radius: 8px;
    background: #fff;
    box-shadow: 0 2px 6px rgba(0, 0, 0, 0.2);
}

.map-open {
    position: absolute;
    left: 8px;
    bottom: 9px;
    display: flex;
    align-items: center;
    gap: 7px;
    height: 32px;
    padding: 0 10px 0 7px;
    font-size: 14px;
    color: #4d4d4d;
}

.map-legal {
    position: absolute;
    right: 99px;
    bottom: 0;
    display: flex;
    gap: 8px;
    padding: 0 8px;
    font-size: 10px;
    line-height: 16px;
    color: #000;
    background: #fff;
    border-radius: 0 4px 0 0;
}

.map-scale {
    position: absolute;
    right: 21px;
    bottom: 0;
    display: flex;
    align-items: center;
    font-size: 10px;
    line-height: 16px;
    color: #333;
}

.map-scale span {
    padding: 0 3px;
    background: #fff;
}

.map-scale::before,
.map-scale::after {
    content: "";
    width: 11px;
    height: 2px;
    background: #4d4d4d;
    outline: 1px solid #fff;
}

.office {
    position: relative;
    width: 408px;
    margin: 104px 0 0 50px;
    padding: 28px 30px 30px;
    color: #222;
    background: #fff;
    box-shadow: 0 0 60px rgba(0, 0, 0, 0.3);
    font-family: Lato, sans-serif;
}

.container {
    display: flow-root;
}

.office h2 {
    margin: 0 0 3px;
    font-size: 13px;
    line-height: 17px;
    font-weight: 400;
    letter-spacing: 1px;
    color: #666;
}

.office ul {
    margin: 0;
    padding: 0;
    list-style: none;
}

.office li {
    display: flex;
    align-items: center;
    gap: 24px;
    height: 71px;
    padding-bottom: 2px;
    font-size: 16px;
    border-bottom: 1px solid #e4e4e4;
}

.office li:last-child {
    border-bottom: none;
}

.office li svg {
    width: 40px;
    height: 40px;
}

.office-phone {
    font-weight: 700;
    color: #111;
}

.office-mail {
    color: #2387c8;
}

/* social buttons */
.social {
    position: fixed;
    top: 200px;
    left: 35px;
    display: flex;
    flex-direction: column;
    gap: 10px;
}

.social a {
    display: flex;
    align-items: center;
    justify-content: center;
    width: 40px;
    height: 40px;
    border-radius: 50%;
}

.vk { background: rgba(105, 133, 170, 0.85); }
.fb { background: #5787a6; }
.tw { background: #40cbdb; }

/* footer */
.footer {
    display: flex;
    flex-direction: column;
    align-items: center;
    padding: 60px 0 58px;
}

.slogan,
.copy,
.policy {
    margin: 0;
    line-height: 17px;
}

.slogan {
    margin: 20px 0 43px;
    font-size: 13px;
    letter-spacing: 1px;
    color: #c3c5c6;
}

.footer-contacts {
    display: flex;
    align-items: center;
    justify-content: center;
    gap: 30px;
    width: 496px;
    height: 53px;
    padding-bottom: 2px;
    border-radius: 5px;
    background: #2a2e31;
}

.divider {
    width: 1px;
    height: 23px;
    background: #6a6d6f;
}

.copy {
    margin: 25px 0 19px;
    color: #e6e7e7;
}

.policy {
    text-decoration: underline;
    color: #c3c5c6;
}

.dev {
    display: flex;
    align-items: center;
    gap: 6px;
    margin-top: 18px;
    font-size: 16px;
    color: #8f9395;
}

.to-top {
    position: fixed;
    right: 20px;
    bottom: 17px;
    width: 49px;
    height: 49px;
    border-radius: 50%;
    background: #919597;
}
```
